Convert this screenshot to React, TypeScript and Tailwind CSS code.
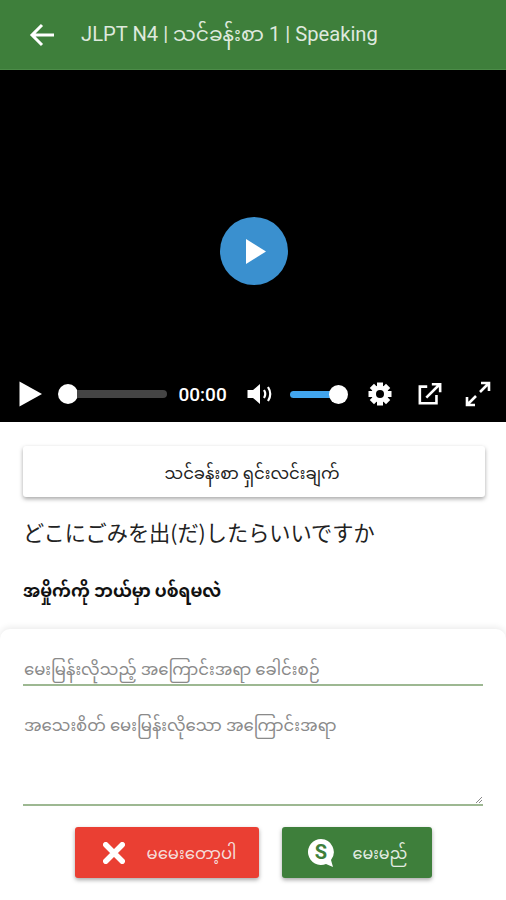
import React from "react";

const font = { fontFamily: '"Roboto","Noto Sans Myanmar","Noto Sans","Noto Sans CJK JP",sans-serif' };

function Controls() {
  return (
    <div className="flex h-[56px] items-center pl-[19px] pr-[15px]">
      <svg width="24" height="28" viewBox="0 0 24 28" className="shrink-0"><path d="M0.5 1.5 L23 14 L0.5 26.5 Z" fill="#fff" /></svg>
      <div className="ml-[15px] flex w-[111px] items-center">
        <div className="h-[20px] w-[20px] shrink-0 rounded-full bg-white" />
        <div className="-ml-[1px] h-[8px] flex-1 rounded-r-full bg-[#444444]" />
      </div>
      <span className="ml-[11px] w-[50px] text-[19px] font-medium leading-none text-white">00:00</span>
      <svg width="28" height="26" viewBox="0 0 28 26" className="ml-[19px] shrink-0">
        <path d="M0.5 9 H6 L13 3 V23 L6 17 H0.5 Z" fill="#fff" />
        <path d="M17 9 Q19.5 13 17 17 M21 6 Q25.5 13 21 20" stroke="#fff" strokeWidth="2.2" fill="none" />
      </svg>
      <div className="ml-[15px] flex w-[59px] items-center">
        <div className="h-[7px] flex-1 rounded-l-full bg-[#41a5ee]" />
        <div className="-ml-[1px] h-[19px] w-[19px] shrink-0 rounded-full bg-white" />
      </div>
      <svg width="24" height="24" viewBox="0 0 24 24" className="ml-[20px] shrink-0">
        <g fill="#fff">
          <circle cx="12" cy="12" r="8.5" />
          <rect x="9" y="0.5" width="6" height="23" />
          <rect x="9" y="0.5" width="6" height="23" transform="rotate(45 12 12)" />
          <rect x="9" y="0.5" width="6" height="23" transform="rotate(90 12 12)" />
          <rect x="9" y="0.5" width="6" height="23" transform="rotate(135 12 12)" />
        </g>
        <circle cx="12" cy="12" r="4" fill="#000" />
      </svg>
      <svg width="24" height="24" viewBox="0 0 26 26" className="ml-[26px] shrink-0" fill="none" stroke="#fff" strokeWidth="2.8">
        <path d="M10 5 H2 V23 H20 V14" />
        <path d="M9 17 L23 3 M15 2.5 H24 V11" />
      </svg>
      <svg width="26" height="26" viewBox="0 0 26 26" className="ml-[23px] shrink-0" fill="none" stroke="#fff" strokeWidth="2.6">
        <path d="M15 11 L24 2 M16 2 H24 V10" />
        <path d="M11 15 L2 24 M2 16 V24 H10" />
      </svg>
    </div>
  );
}

export default function App() {
  return (
    <div className="flex h-[900px] w-[506px] flex-col overflow-hidden bg-white" style={font}>
      <header className="flex h-[70px] shrink-0 items-center border-b border-[#4c8c48] bg-[#3e7f3b] pl-[29px]">
        <svg width="25" height="24" viewBox="0 0 25 24" fill="none" stroke="#fff" strokeWidth="3">
          <path d="M25 12 H3 M13 2 L3 12 L13 22" />
        </svg>
        <h1 className="ml-[27px] text-[20.2px] font-normal leading-none text-[#dfe9de]">JLPT N4 | သင်ခန်းစာ 1 | Speaking</h1>
      </header>

      <section className="relative flex h-[352px] shrink-0 flex-col justify-end bg-black">
        <div className="absolute left-[220px] top-[147px] flex h-[68px] w-[68px] items-center justify-center rounded-full bg-[#3a90cf]">
          <svg width="20" height="25" viewBox="0 0 20 25" className="ml-[4px]"><path d="M0 0 L20 12.5 L0 25 Z" fill="#fff" /></svg>
        </div>
        <Controls />
      </section>

      <main className="flex flex-1 flex-col">
        <div className="px-[23px] pt-[24px]">
          <button className="flex h-[51px] w-[462px] items-center justify-center rounded-[3px] bg-white pr-[4px] pt-[5px] text-[16.5px] text-[#222] shadow-[0_2px_4px_rgba(0,0,0,0.35)]">သင်ခန်းစာ ရှင်းလင်းချက်</button>
          <p className="mt-[22px] text-[21.2px] leading-[26px] text-[#222]" style={{ fontFamily: '"Noto Sans CJK JP",sans-serif' }}>どこにごみを出(だ)したらいいですか</p>
          <p className="mt-[33px] text-[17px] font-bold leading-[26px] text-[#111]">အမှိုက်ကို ဘယ်မှာ ပစ်ရမလဲ</p>
        </div>

        <div className="mt-[25px] flex flex-1 flex-col rounded-t-[10px] bg-white px-[23px] pt-[25px] shadow-[0_-2px_6px_rgba(0,0,0,0.08)]">
          <div className="flex h-[32px] items-center border-b-2 border-[#9db892] pl-[1px] pt-[2px] text-[16.5px] text-[#8a8a8a]">မေးမြန်းလိုသည့် အကြောင်းအရာ ခေါင်းစဉ်</div>
          <div className="relative mt-[22px] h-[98px] border-b-2 border-[#9db892] pl-[1px] pt-[5px] text-[16.5px] leading-[26px] text-[#8a8a8a]">
            အသေးစိတ် မေးမြန်းလိုသော အကြောင်းအရာ
            <svg width="6" height="6" viewBox="0 0 6 6" className="absolute bottom-[1px] right-[1px]"><path d="M0 6 L6 0 M3 6 L6 3" stroke="#888" strokeWidth="1" /></svg>
          </div>
          <div className="mt-[21px] flex justify-center gap-[23px]">
            <button className="flex h-[51px] w-[184px] items-center rounded-[3px] bg-[#ea3f33] pl-[28px] text-[16.5px] text-[#f5dcd9] shadow-[0_2px_4px_rgba(0,0,0,0.35)]">
              <svg width="22" height="22" viewBox="0 0 24 24" stroke="#fff" strokeWidth="6" strokeLinecap="round"><path d="M3 3 L21 21 M21 3 L3 21" /></svg>
              <span className="ml-[22px] pt-[3px]">မမေးတော့ပါ</span>
            </button>
            <button className="flex h-[51px] w-[150px] items-center rounded-[3px] bg-[#3e7f3b] pl-[25px] text-[16px] text-[#e3ece2] shadow-[0_2px_4px_rgba(0,0,0,0.35)]">
              <svg width="30" height="30" viewBox="0 0 30 30">
                <path d="M14 1 A13 13 0 1 0 19 26 L26 29 L24 22 A13 13 0 0 0 14 1 Z" fill="#fff" />
                <text x="14" y="20.5" textAnchor="middle" fontSize="20" fontWeight="700" fill="#3e7f3b" fontFamily="Roboto">S</text>
              </svg>
              <span className="ml-[16px] pt-[3px]">မေးမည်</span>
            </button>
          </div>
        </div>
      </main>
    </div>
  );
}
